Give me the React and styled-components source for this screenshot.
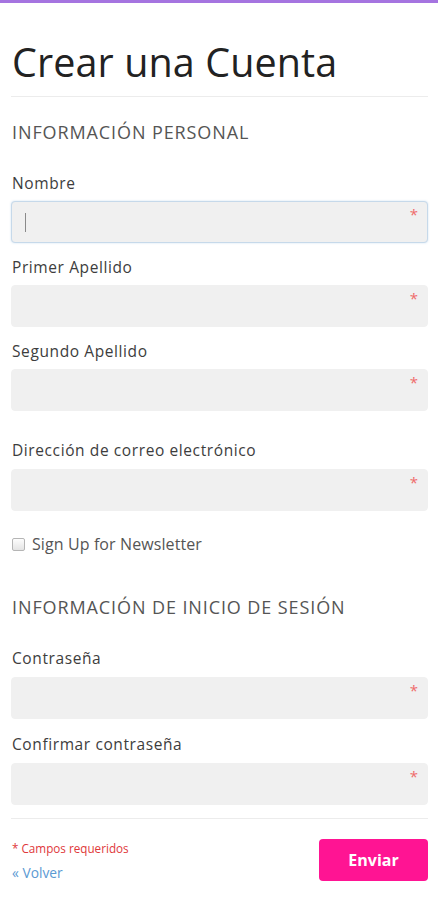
import React from "react";
import styled, { createGlobalStyle } from "styled-components";

const Global = createGlobalStyle`
  html, body { margin: 0; padding: 0; background: #fff; }
  body { font-family: "Open Sans", "Noto Sans", sans-serif; color: #333; }
  * { box-sizing: border-box; }
`;

const TopBar = styled.div`
  height: 3px;
  background: #a574e0;
`;

const Page = styled.main`
  padding: 0 10px 0 11px;
`;

const Title = styled.h1`
  margin: 35px 0 0;
  font-family: "Open Sans", sans-serif;
  font-weight: 400;
  font-size: 39.5px;
  line-height: 48px;
  color: #222;
  letter-spacing: 0.1px;
  padding-left: 1px;
`;

const Divider = styled.hr`
  margin: ${(p) => p.$top}px 0 0;
  border: 0;
  height: 1px;
  background: #ececec;
`;

const SectionTitle = styled.h2`
  margin: ${(p) => p.$top}px 0 0;
  font-weight: 400;
  font-size: 18px;
  line-height: 24px;
  letter-spacing: 0.9px;
  color: #555;
  padding-left: 1px;
`;

const Field = styled.div`
  margin-top: ${(p) => p.$top}px;
  display: flex;
  flex-direction: column;
`;

const Label = styled.label`
  font-size: 15.5px;
  line-height: 20px;
  letter-spacing: 0.6px;
  color: #3d3d3d;
  margin-bottom: ${(p) => p.$gap ?? 8}px;
  padding-left: 1px;
`;

const InputBox = styled.div`
  position: relative;
  height: 42px;
  border-radius: 4px;
  background: #f0f0f0;
  border: 1px solid ${(p) => (p.$focus ? "#c6d9ea" : "#f0f0f0")};
  box-shadow: ${(p) => (p.$focus ? "0 0 2px rgba(150,190,230,0.5)" : "none")};
  &::after {
    content: "*";
    position: absolute;
    right: 9px;
    top: 4px;
    color: #ef6b6b;
    font-size: 15px;
    line-height: 16px;
  }
`;

const Caret = styled.span`
  position: absolute;
  left: 13px;
  top: 11px;
  width: 1px;
  height: 19px;
  background: #8a8a8a;
`;

const CheckRow = styled.label`
  margin-top: 23px;
  display: flex;
  align-items: center;
  gap: 7px;
  font-size: 16px;
  line-height: 20px;
  letter-spacing: 0.1px;
  color: #555;
  padding-left: 1px;
`;

const Box = styled.span`
  width: 13px;
  height: 13px;
  border: 1px solid #b5b5b5;
  border-radius: 2px;
  background: linear-gradient(#fdfdfd, #e4e4e4);
`;

const Footer = styled.div`
  margin-top: 20px;
  display: flex;
  justify-content: space-between;
  align-items: flex-start;
`;

const FooterLeft = styled.div`
  display: flex;
  flex-direction: column;
  padding-top: 1px;
`;

const Required = styled.span`
  font-size: 11.7px;
  line-height: 16px;
  color: #e0383a;
  padding-left: 1px;
`;

const Back = styled.a`
  margin-top: 8px;
  font-size: 13.8px;
  line-height: 18px;
  color: #5b9ad3;
  text-decoration: none;
  padding-left: 1px;
`;

const Submit = styled.button`
  width: 109px;
  height: 42px;
  border: 0;
  border-radius: 4px;
  background: #ff1493;
  color: #fff;
  font-family: "Open Sans", sans-serif;
  font-weight: 700;
  font-size: 16px;
`;

export default function App() {
  return (
    <>
      <Global />
      <TopBar />
      <Page>
        <Title>Crear una Cuenta</Title>
        <Divider $top={10} />
        <SectionTitle $top={23}>INFORMACIÓN PERSONAL</SectionTitle>
        <Field $top={29}>
          <Label>Nombre</Label>
          <InputBox $focus>
            <Caret />
          </InputBox>
        </Field>
        <Field $top={14}>
          <Label>Primer Apellido</Label>
          <InputBox />
        </Field>
        <Field $top={14}>
          <Label>Segundo Apellido</Label>
          <InputBox />
        </Field>
        <Field $top={29}>
          <Label $gap={9}>Dirección de correo electrónico</Label>
          <InputBox />
        </Field>
        <CheckRow>
          <Box />
          Sign Up for Newsletter
        </CheckRow>
        <SectionTitle $top={41}>INFORMACIÓN DE INICIO DE SESIÓN</SectionTitle>
        <Field $top={29}>
          <Label $gap={9}>Contraseña</Label>
          <InputBox />
        </Field>
        <Field $top={15}>
          <Label $gap={9}>Confirmar contraseña</Label>
          <InputBox />
        </Field>
        <Divider $top={13} />
        <Footer>
          <FooterLeft>
            <Required>* Campos requeridos</Required>
            <Back href="#">« Volver</Back>
          </FooterLeft>
          <Submit>Enviar</Submit>
        </Footer>
      </Page>
    </>
  );
}
